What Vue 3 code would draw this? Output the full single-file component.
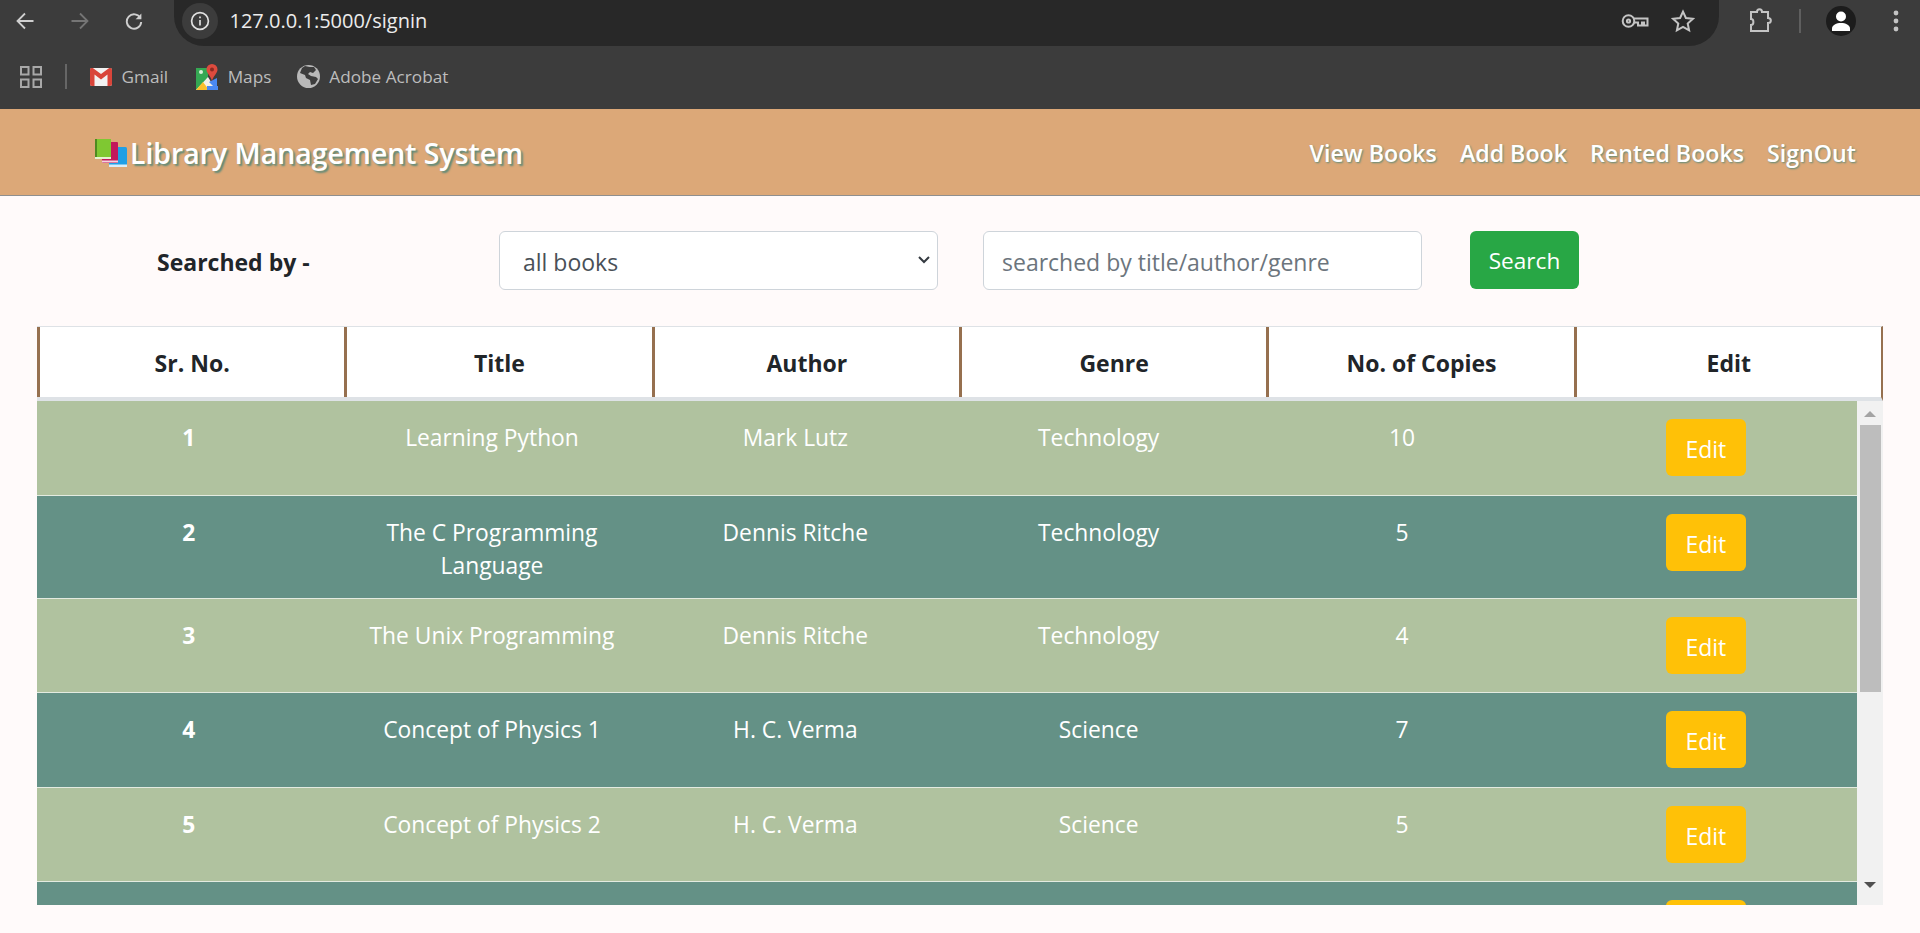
<script setup>
const headers = ["Sr. No.", "Title", "Author", "Genre", "No. of Copies", "Edit"]

const books = [
  { id: 1, title: "Learning Python", author: "Mark Lutz", genre: "Technology", copies: 10, edit: "Edit" },
  { id: 2, title: "The C Programming Language", author: "Dennis Ritche", genre: "Technology", copies: 5, edit: "Edit" },
  { id: 3, title: "The Unix Programming", author: "Dennis Ritche", genre: "Technology", copies: 4, edit: "Edit" },
  { id: 4, title: "Concept of Physics 1", author: "H. C. Verma", genre: "Science", copies: 7, edit: "Edit" },
  { id: 5, title: "Concept of Physics 2", author: "H. C. Verma", genre: "Science", copies: 5, edit: "Edit" },
  // only the top of this row shows above the fold
  { id: "", title: "", author: "", genre: "", copies: "", edit: "" },
]

const links = ["View Books", "Add Book", "Rented Books", "SignOut"]
</script>

<template>
  <div class="page">
    <div class="toolbar">
      <svg class="tool" viewBox="0 0 18 18" fill="none" stroke="#cfcfcf" stroke-width="1.8"><path d="M17.5 9H1.5M9 1.5 1.5 9 9 16.5" /></svg>
      <svg class="tool" viewBox="0 0 18 18" fill="none" stroke="#757575" stroke-width="1.8"><path d="M.5 9h16M9 1.5 16.5 9 9 16.5" /></svg>
      <svg class="tool" viewBox="0 0 18 18" fill="none" stroke="#cfcfcf" stroke-width="1.9"><path d="M15.4 6.2A7.2 7.2 0 1 0 16.2 10" /><path d="M16.4 1.4v5.8h-5.8z" fill="#cfcfcf" stroke="none" /></svg>
      <div class="omnibox">
        <span class="site-info">
          <svg width="20" height="20" viewBox="0 0 20 20" fill="none" stroke="#e0e0e0" stroke-width="1.7"><circle cx="10" cy="10" r="8.4" /><path d="M10 9v5.4M10 5.4v1.9" /></svg>
        </span>
        <span class="url">127.0.0.1:5000/signin</span>
        <svg class="key" width="28" height="16" viewBox="0 0 28 16" fill="none" stroke="#c4c4c4" stroke-width="2"><circle cx="7.5" cy="8" r="5.8" /><circle cx="7.5" cy="8" r="1.6" /><path d="M13 5.5h13.5v7h-3.5v-3h-2v3h-4v-3H13" /></svg>
        <svg class="star" width="24" height="24" viewBox="0 0 24 24" fill="none" stroke="#c4c4c4" stroke-width="2"><path d="m12 2.6 2.9 6.4 7 .8-5.2 4.7 1.400 6.900-6.100-3.500-6.100 3.500 1.400-6.900-5.200-4.700 7-.8z" /></svg>
      </div>
      <svg class="puzzle" width="23" height="25" viewBox="0 0 23 25" fill="none" stroke="#c4c4c4" stroke-width="2"><path d="M2 4h6c0-3.600 5-3.600 5 0h6v6c3.800 0 3.800 5 0 5v8H2v-6c3.200 0 3.200-6 0-6z" /></svg>
      <span class="tool-divider"></span>
      <span class="avatar">
        <svg width="20" height="22" viewBox="0 0 20 22" fill="#fff"><circle cx="10" cy="6.500" r="5" /><path d="M1 21v-2.500c0-3.500 4.500-5.500 9-5.500s9 2 9 5.500V21z" /></svg>
      </span>
      <svg class="dots" width="6" height="24" viewBox="0 0 6 24" fill="#c4c4c4"><circle cx="3" cy="4" r="2.400" /><circle cx="3" cy="12" r="2.400" /><circle cx="3" cy="20" r="2.400" /></svg>
    </div>

    <div class="bookmarks">
      <svg class="apps" width="22" height="22" viewBox="0 0 22 22" fill="none" stroke="#a8a8a8" stroke-width="2"><rect x="1" y="1" width="7.500" height="7.500" /><rect x="13.500" y="1" width="7.500" height="7.500" /><rect x="1" y="13.500" width="7.500" height="7.500" /><rect x="13.500" y="13.500" width="7.500" height="7.500" /></svg>
      <span class="mark-divider"></span>
      <svg class="mark-icon" width="22" height="20" viewBox="0 0 22 20"><rect y="1" width="22" height="18" rx="2" fill="#f2f2f2" /><path d="M0 3c0-2 2-2.500 3.500-1.500L11 7l7.500-5.500C20 .5 22 1 22 3v14c0 1-.8 2-2 2h-2.500V7.500L11 12.500 4.500 7.500V19H2c-1.200 0-2-1-2-2z" fill="#d9453a" /></svg>
      <span class="mark-text gmail">Gmail</span>
      <svg class="mark-icon" width="22" height="26" viewBox="0 0 22 26"><path d="M0 4h12v22H0z" fill="#35a853" /><path d="M0 26 12 13l8 13z" fill="#f4f1e8" /><path d="M0 26l7-8 6 8z" fill="#fbc02d" /><path d="M13 18l8 8V14z" fill="#4a89f3" /><path d="M11 22h11v4H11z" fill="#4a89f3" /><path d="M16 0a5.500 5.500 0 0 1 5.500 5.500C21.500 9.500 17 12 16 17c-1-5-5.500-7.500-5.500-11.500A5.500 5.500 0 0 1 16 0z" fill="#dd4b3e" /><circle cx="16" cy="5.500" r="2" fill="#8c2a22" /><circle cx="5" cy="8" r="2" fill="#d7efd9" /></svg>
      <span class="mark-text maps">Maps</span>
      <svg class="mark-icon" width="23" height="23" viewBox="0 0 23 23"><circle cx="11.500" cy="11.500" r="11.500" fill="#b9b9b9" /><path d="M8 1c3 1 6 1 9 1l2 3-3 3-3-1-2 2 3 2 5 1 2 2-3 5-4 1-1-5-4-2-1-3-5-2 2-5z" fill="#3d3d3d" /></svg>
      <span class="mark-text">Adobe Acrobat</span>
    </div>

    <nav class="navbar">
      <div class="brand">
        <svg width="34" height="30" viewBox="0 0 34 30">
          <rect x="15" y="8" width="18" height="20" rx="1.500" fill="#1f9fe6" />
          <rect x="15" y="25.500" width="18" height="2.500" fill="#d8eefa" />
          <rect x="8" y="3" width="16" height="21" rx="1" fill="#c2185b" />
          <rect x="8" y="21.500" width="16" height="2" fill="#f3d3df" />
          <rect x="1" y="0" width="16" height="20" fill="#7fc832" />
          <rect x="1" y="0" width="2" height="20" fill="#4e8a20" />
          <rect x="1" y="18" width="16" height="2" fill="#e5f3d0" />
        </svg>
        <span>Library Management System</span>
      </div>
      <div class="nav-links">
        <a v-for="link in links" :key="link" href="#">{{ link }}</a>
      </div>
    </nav>

    <div class="search-row">
      <label class="search-label">Searched by -</label>
      <div class="select-wrap">
        <select class="field select-field">
          <option>all books</option>
        </select>
        <svg class="chevron" width="12" height="8" viewBox="0 0 12 8" fill="none" stroke="#343a40" stroke-width="2"><path d="m1 1 5 5 5-5" /></svg>
      </div>
      <input class="field input-field" type="text" placeholder="searched by title/author/genre" />
      <button class="search-btn">Search</button>
    </div>

    <div class="table-head">
      <div v-for="h in headers" :key="h" class="head-cell">{{ h }}</div>
    </div>

    <div class="table-body">
      <div class="rows">
        <div v-for="(book, index) in books" :key="index" class="row">
          <div class="cell num">{{ book.id }}</div>
          <div class="cell">{{ book.title }}</div>
          <div class="cell">{{ book.author }}</div>
          <div class="cell">{{ book.genre }}</div>
          <div class="cell">{{ book.copies }}</div>
          <div class="cell-edit"><button class="edit-btn">{{ book.edit }}</button></div>
        </div>
      </div>
      <div class="scrollbar">
        <span class="arrow-up"></span>
        <span class="thumb"></span>
        <span class="arrow-down"></span>
      </div>
    </div>
  </div>
</template>

<style scoped>
.page {
  width: 1920px;
  height: 933px;
  overflow: hidden;
  font-family: "Open Sans", "Noto Sans", sans-serif;
  color: #212529;
}

/* browser bar */
.toolbar {
  height: 46px;
  background: #3c3c3c;
  display: flex;
  align-items: center;
  padding: 0 0 5px 16px;
  box-sizing: border-box;
}

.tool {
  width: 18px;
  height: 18px;
  margin-right: 36.5px;
}

.omnibox {
  width: 1545px;
  height: 46px;
  margin: 5px 0 0 -6px;
  padding: 0 0 5px 8px;
  background: #282828;
  border-radius: 0 0 30px 30px;
  display: flex;
  align-items: center;
  box-sizing: border-box;
}

.site-info {
  width: 36px;
  height: 36px;
  border-radius: 50%;
  background: #3c3c3c;
  display: flex;
  align-items: center;
  justify-content: center;
}

.url {
  margin-left: 12px;
  font-size: 20px;
  color: #ececec;
  flex: 1;
}

.key {
  margin-right: 22px;
}

.star {
  margin-right: 24px;
}

.puzzle {
  margin-left: 30px;
}

.tool-divider {
  width: 2px;
  height: 24px;
  background: #5f5f5f;
  margin-left: 27px;
}

.avatar {
  width: 30px;
  height: 30px;
  margin-left: 25px;
  border-radius: 50%;
  background: #1c1c1c;
  display: flex;
  align-items: center;
  justify-content: center;
}

.dots {
  margin-left: 37px;
}

.bookmarks {
  height: 63px;
  background: #3c3c3c;
  display: flex;
  align-items: center;
  padding: 0 0 2px 20px;
  box-sizing: border-box;
}

.mark-divider {
  width: 2px;
  height: 25px;
  background: #666;
  margin: 0 23px;
}

.mark-text {
  font-size: 17.2px;
  color: #bdbdbd;
  margin-left: 9.5px;
}

.gmail {
  margin-right: 28px;
}

.maps {
  margin-right: 25.5px;
}

/* navbar */
.navbar {
  height: 87px;
  background: #dca878;
  border-bottom: 1px solid #8f8f8f;
  box-sizing: border-box;
  display: flex;
  align-items: center;
  justify-content: space-between;
  padding: 2px 64px 0 94px;
}

.brand {
  display: flex;
  align-items: center;
  gap: 2px;
  color: #fff;
  font-size: 28.4px;
  font-weight: 600;
  text-shadow: 2px 2px 2px #5d8a78;
}

.brand svg {
  margin-top: 2px;
}

.nav-links {
  display: flex;
  gap: 23px;
}

.nav-links a {
  color: #fff;
  font-size: 23.2px;
  font-weight: 600;
  text-decoration: none;
  text-shadow: 1px 1px 2px #5d8a78;
}

/* search */
.search-row {
  height: 130px;
  box-sizing: border-box;
  padding: 35px 0 0 157px;
  display: flex;
  align-items: flex-start;
}

.search-label {
  width: 342px;
  height: 59px;
  line-height: 62px;
  font-size: 23px;
  font-weight: 700;
}

.select-wrap {
  position: relative;
  margin-right: 45px;
}

.field {
  height: 59px;
  box-sizing: border-box;
  border: 1px solid #ced4da;
  border-radius: 6px;
  background: #fff;
  font-family: inherit;
  font-size: 23px;
  color: #495057;
  display: block;
}

.select-field {
  width: 439px;
  padding: 2px 0 0 23px;
  appearance: none;
}

.chevron {
  position: absolute;
  right: 8px;
  top: 25px;
}

.input-field {
  width: 439px;
  padding: 2px 18px 0;
  margin-right: 48px;
}

.input-field::placeholder {
  color: #6c757d;
}

.search-btn {
  width: 109px;
  height: 58px;
  border: none;
  border-radius: 6px;
  background: #28a745;
  color: #fff;
  font-family: inherit;
  font-size: 22.6px;
}

/* table */
.table-head {
  margin-left: 37px;
  width: 1846px;
  height: 75px;
  box-sizing: border-box;
  background: #fff;
  border-top: 1px solid #dee2e6;
  border-bottom: 4px solid #dee2e6;
  border-right: 2px solid #96704f;
  display: grid;
  grid-template-columns: repeat(6, 1fr);
}

.head-cell {
  border-left: 3px solid #96704f;
  padding-top: 2px;
  display: flex;
  align-items: center;
  justify-content: center;
  font-size: 23px;
  font-weight: 700;
}

.table-body {
  margin-left: 37px;
  width: 1846px;
  height: 504px;
  display: flex;
  overflow: hidden;
}

.rows {
  width: 1820px;
  flex: none;
}

.row {
  display: grid;
  grid-template-columns: repeat(6, 1fr);
  border-bottom: 1px solid #e3ebe0;
  color: #fff;
  text-align: center;
  font-size: 22.8px;
  line-height: 33px;
}

.row:nth-child(odd) {
  background: #b0c29f;
}

.row:nth-child(even) {
  background: #649186;
}

.cell {
  padding: 20px 20px 16px;
}

.num {
  font-weight: 700;
}

.cell-edit {
  padding: 18px 0 18.6px 1px;
  display: flex;
  justify-content: center;
}

.edit-btn {
  width: 80px;
  height: 57px;
  border: none;
  border-radius: 6px;
  background: #ffc107;
  color: #fff;
  font-family: inherit;
  font-size: 23px;
  padding-top: 4px;
}

.scrollbar {
  width: 26px;
  background: #f1f1f1;
  display: flex;
  flex-direction: column;
  align-items: center;
}

.arrow-up {
  width: 0;
  height: 0;
  margin-top: 10px;
  border-left: 6px solid transparent;
  border-right: 6px solid transparent;
  border-bottom: 6px solid #a3a3a3;
}

.thumb {
  width: 21px;
  height: 267px;
  margin-top: 8px;
  background: #bdbdbd;
}

.arrow-down {
  width: 0;
  height: 0;
  margin-top: 190px;
  border-left: 6px solid transparent;
  border-right: 6px solid transparent;
  border-top: 6px solid #505050;
}
</style>

<style>
html,
body {
  margin: 0;
  background: #fffafa;
  overflow: hidden;
}
</style>
